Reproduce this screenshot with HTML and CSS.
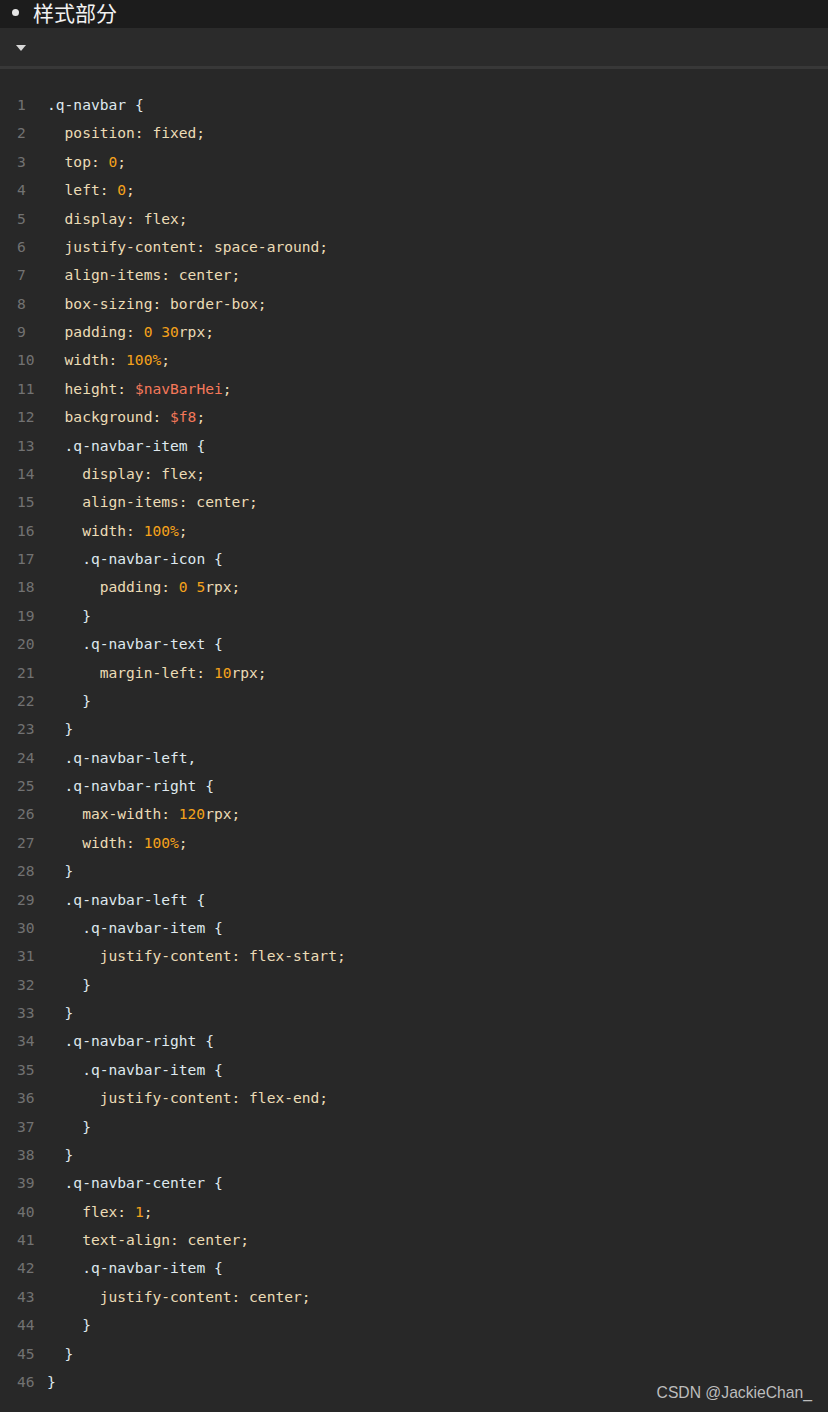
FILE: index.html
```html
<!DOCTYPE html>
<html lang="zh-CN">
<head>
    <meta charset="UTF-8">
    <meta name="viewport" content="width=device-width, initial-scale=1.0">
    <title>样式部分</title>
    <link rel="stylesheet" href="styles.css">
</head>
<body>
    <div class="title-bar">
        <span class="dot"></span>
        <h2 class="title">样式部分</h2>
    </div>

    <div class="toolbar">
        <span class="caret"></span>
    </div>

    <div class="code-box">
        <ol class="code">
            <li><span class="sel">.q-navbar</span> <span class="br">{</span></li>
            <li>  position: fixed;</li>
            <li>  top: <span class="num">0</span>;</li>
            <li>  left: <span class="num">0</span>;</li>
            <li>  display: flex;</li>
            <li>  justify-content: space-around;</li>
            <li>  align-items: center;</li>
            <li>  box-sizing: border-box;</li>
            <li>  padding: <span class="num">0</span> <span class="num">30</span>rpx;</li>
            <li>  width: <span class="num">100%</span>;</li>
            <li>  height: <span class="var">$navBarHei</span>;</li>
            <li>  background: <span class="var">$f8</span>;</li>
            <li>  <span class="sel">.q-navbar-item</span> <span class="br">{</span></li>
            <li>    display: flex;</li>
            <li>    align-items: center;</li>
            <li>    width: <span class="num">100%</span>;</li>
            <li>    <span class="sel">.q-navbar-icon</span> <span class="br">{</span></li>
            <li>      padding: <span class="num">0</span> <span class="num">5</span>rpx;</li>
            <li>    <span class="br">}</span></li>
            <li>    <span class="sel">.q-navbar-text</span> <span class="br">{</span></li>
            <li>      margin-left: <span class="num">10</span>rpx;</li>
            <li>    <span class="br">}</span></li>
            <li>  <span class="br">}</span></li>
            <li>  <span class="sel">.q-navbar-left,</span></li>
            <li>  <span class="sel">.q-navbar-right</span> <span class="br">{</span></li>
            <li>    max-width: <span class="num">120</span>rpx;</li>
            <li>    width: <span class="num">100%</span>;</li>
            <li>  <span class="br">}</span></li>
            <li>  <span class="sel">.q-navbar-left</span> <span class="br">{</span></li>
            <li>    <span class="sel">.q-navbar-item</span> <span class="br">{</span></li>
            <li>      justify-content: flex-start;</li>
            <li>    <span class="br">}</span></li>
            <li>  <span class="br">}</span></li>
            <li>  <span class="sel">.q-navbar-right</span> <span class="br">{</span></li>
            <li>    <span class="sel">.q-navbar-item</span> <span class="br">{</span></li>
            <li>      justify-content: flex-end;</li>
            <li>    <span class="br">}</span></li>
            <li>  <span class="br">}</span></li>
            <li>  <span class="sel">.q-navbar-center</span> <span class="br">{</span></li>
            <li>    flex: <span class="num">1</span>;</li>
            <li>    text-align: center;</li>
            <li>    <span class="sel">.q-navbar-item</span> <span class="br">{</span></li>
            <li>      justify-content: center;</li>
            <li>    <span class="br">}</span></li>
            <li>  <span class="br">}</span></li>
            <li><span class="br">}</span></li>
        </ol>
        <div class="watermark">CSDN @JackieChan_</div>
    </div>
</body>
</html>
```

FILE: styles.css
```css
html, body {
    margin: 0;
    padding: 0;
    background-color: #282828;
}
body {
    font-family: "Liberation Sans", Arial, sans-serif;
    width: 828px;
    height: 1412px;
    overflow: hidden;
}
.title-bar {
    height: 28px;
    background-color: #1c1c1c;
    display: flex;
    align-items: flex-start;
    padding-left: 12px;
    overflow: hidden;
}
.dot {
    width: 7px;
    height: 7px;
    border-radius: 50%;
    background-color: #e6e6e6;
    margin: 9px 14px 0 0;
}
.title {
    margin: 0;
    font-family: "Noto Sans CJK SC", sans-serif;
    font-weight: normal;
    font-size: 21px;
    line-height: 24px;
    color: #f2f2f2;
}
.toolbar {
    height: 38px;
    background-color: #2b2b2b;
    border-bottom: 3px solid #383838;
    display: flex;
    align-items: center;
    padding-left: 16px;
}
.caret {
    width: 0;
    height: 0;
    border-left: 5px solid transparent;
    border-right: 5px solid transparent;
    border-top: 6px solid #d8d8d8;
    margin-top: 1px;
}
.code-box {
    position: relative;
    height: 1343px;
    background-color: #282828;
}
.code {
    margin: 0;
    padding: 22px 0 0 0;
    list-style: none;
    counter-reset: ln;
    font-family: "DejaVu Sans Mono", "Liberation Mono", monospace;
    font-size: 14.6px;
    line-height: 28.38px;
    color: #ecdcb6;
}
.code li {
    white-space: pre;
    counter-increment: ln;
    padding-left: 47px;
    position: relative;
}
.code li::before {
    content: counter(ln);
    position: absolute;
    left: 17px;
    color: #727272;
}
.sel {
    color: #dfe8ee;
}
.br {
    color: #dfe8ee;
}
.num {
    color: #f5a21b;
}
.var {
    color: #f4785a;
}
.watermark {
    position: absolute;
    right: 16px;
    bottom: 10px;
    font-size: 15.7px;
    color: #bdbdbd;
}
```
